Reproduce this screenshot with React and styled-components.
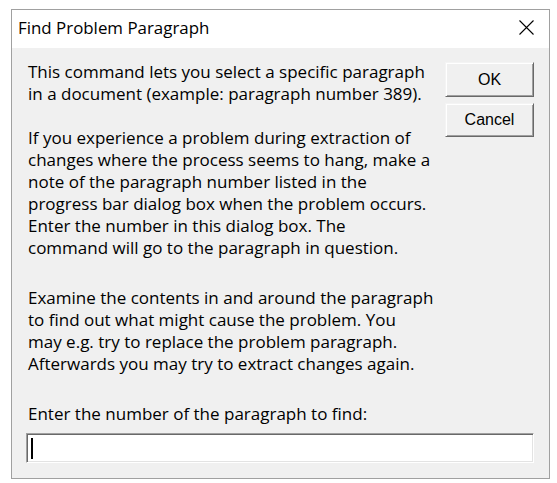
import React from "react";
import styled, { createGlobalStyle } from "styled-components";

const Global = createGlobalStyle`
  html, body { margin: 0; padding: 0; background: #ffffff; }
  body { font-family: "Open Sans", "Noto Sans", sans-serif; color: #000; }
`;

const Window = styled.div`
  box-sizing: border-box;
  margin: 9px 0 0 11px;
  width: 539px;
  height: 470px;
  border: 1px solid #a0a0a0;
  background: #f0f0f0;
  display: flex;
  flex-direction: column;
`;

const TitleBar = styled.div`
  height: 38px;
  background: #ffffff;
  display: flex;
  align-items: center;
  justify-content: space-between;
  padding: 0 15px 0 6px;
  flex-shrink: 0;
`;

const Title = styled.div`
  font-family: "Open Sans", "Noto Sans", sans-serif;
  font-size: 16.9px;
  line-height: 20px;
  margin-top: -2px;
  white-space: nowrap;
`;

const CloseIcon = styled.svg`
  width: 15px;
  height: 15px;
  display: block;
  margin-top: -4px;
`;

const Content = styled.div`
  padding: 13px 15px 0 14px;
  display: flex;
  flex-direction: column;
`;

const TopRow = styled.div`
  display: flex;
  align-items: flex-start;
  justify-content: space-between;
`;

const TextColumn = styled.div`
  padding-left: 2px;
`;

const Para = styled.div`
  font-size: 17px;
  line-height: 22px;
  margin-bottom: ${(p) => p.$gap || 0}px;
`;

const Line = styled.div`
  white-space: nowrap;
`;

const Buttons = styled.div`
  display: flex;
  flex-direction: column;
  gap: 6px;
  width: 89px;
  margin-top: 1px;
`;

const Button = styled.button`
  box-sizing: border-box;
  width: 89px;
  height: ${(p) => p.$h}px;
  padding: 0;
  background: #f0f0f0;
  border-style: solid;
  border-width: 1px;
  border-color: #f4f4f4 #696969 #696969 #f4f4f4;
  box-shadow: inset 1px 1px 0 #ffffff, inset -1px -1px 0 #a0a0a0;
  font-family: "Liberation Sans", Arial, sans-serif;
  font-size: 16px;
  color: #000;
  display: flex;
  align-items: center;
  justify-content: center;
`;

const Label = styled.div`
  font-size: 17px;
  line-height: 22px;
  padding-left: 2px;
  margin-top: 28px;
  white-space: nowrap;
`;

const TextBox = styled.div`
  box-sizing: border-box;
  margin-top: 8px;
  height: 30px;
  background: #ffffff;
  border-style: solid;
  border-width: 1px;
  border-color: #a0a0a0 #ffffff #ffffff #a0a0a0;
  box-shadow: inset 1px 1px 0 #696969, inset -1px -1px 0 #e3e3e3;
  display: flex;
  align-items: center;
  padding-left: 4px;
`;

const Caret = styled.span`
  display: block;
  width: 2px;
  height: 21px;
  background: #000;
`;

const para1 = [
  "This command lets you select a specific paragraph",
  "in a document (example: paragraph number 389).",
];
const para2 = [
  "If you experience a problem during extraction of",
  "changes where the process seems to hang, make a",
  "note of the paragraph number listed in the",
  "progress bar dialog box when the problem occurs.",
  "Enter the number in this dialog box. The",
  "command will go to the paragraph in question.",
];
const para3 = [
  "Examine the contents in and around the paragraph",
  "to find out what might cause the problem. You",
  "may e.g. try to replace the problem paragraph.",
  "Afterwards you may try to extract changes again.",
];

export default function App() {
  return (
    <>
      <Global />
      <Window>
        <TitleBar>
          <Title>Find Problem Paragraph</Title>
          <CloseIcon viewBox="0 0 15 15">
            <path d="M0.5 0.5 L14.5 14.5 M14.5 0.5 L0.5 14.5" stroke="#000" strokeWidth="1.1" fill="none" />
          </CloseIcon>
        </TitleBar>
        <Content>
          <TopRow>
            <TextColumn>
              <Para $gap={22}>{para1.map((l) => <Line key={l}>{l}</Line>)}</Para>
              <Para $gap={28}>{para2.map((l) => <Line key={l}>{l}</Line>)}</Para>
              <Para>{para3.map((l) => <Line key={l}>{l}</Line>)}</Para>
            </TextColumn>
            <Buttons>
              <Button $h={35}>OK</Button>
              <Button $h={34}>Cancel</Button>
            </Buttons>
          </TopRow>
          <Label>Enter the number of the paragraph to find:</Label>
          <TextBox><Caret /></TextBox>
        </Content>
      </Window>
    </>
  );
}
